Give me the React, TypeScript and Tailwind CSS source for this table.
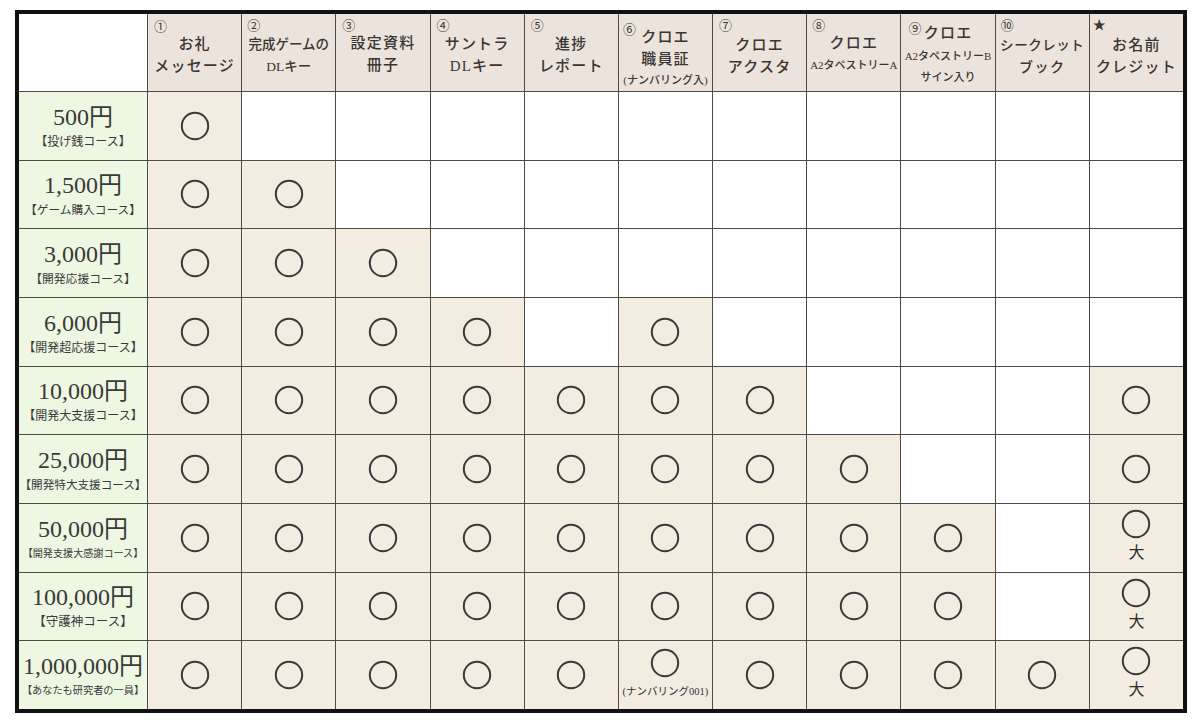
import React from "react";

const SERIF = { fontFamily: '"Liberation Serif", "Noto Sans CJK JP", serif' };
const SANS = { fontFamily: '"Noto Sans CJK JP", "Noto Sans", sans-serif' };

type Line = { t: string; small?: boolean; size?: string; lh?: string };
type Col = { n: string; pt: string; lines: Line[]; numPos: string };

const cols: Col[] = [
  { n: "①", pt: "pt-[19px]", numPos: "left-[6px] top-[5px]", lines: [{ t: "お礼" }, { t: "メッセージ" }] },
  {
    n: "②",
    pt: "pt-[20px]",
    numPos: "left-[5px] top-[4px]",
    lines: [
      { t: "完成ゲームの", size: "text-[13.5px] tracking-normal" },
      { t: "DLキー", size: "text-[13.5px] tracking-normal" },
    ],
  },
  { n: "③", pt: "pt-[18px]", numPos: "left-[6px] top-[4px]", lines: [{ t: "設定資料" }, { t: "冊子" }] },
  { n: "④", pt: "pt-[19px]", numPos: "left-[6px] top-[4px]", lines: [{ t: "サントラ" }, { t: "DLキー" }] },
  { n: "⑤", pt: "pt-[19px]", numPos: "left-[6px] top-[4px]", lines: [{ t: "進捗" }, { t: "レポート" }] },
  {
    n: "⑥",
    pt: "pt-[12px]",
    numPos: "left-[4px] top-[8px]",
    lines: [{ t: "クロエ" }, { t: "職員証" }, { t: "(ナンバリング入)", small: true, lh: "leading-[20px]" }],
  },
  { n: "⑦", pt: "pt-[20px]", numPos: "left-[6px] top-[4px]", lines: [{ t: "クロエ" }, { t: "アクスタ" }] },
  {
    n: "⑧",
    pt: "pt-[18px]",
    numPos: "left-[5px] top-[4px]",
    lines: [{ t: "クロエ" }, { t: "A2タペストリーA", small: true, lh: "leading-[22px]" }],
  },
  {
    n: "⑨",
    pt: "pt-[8px]",
    numPos: "left-[7px] top-[7px]",
    lines: [
      { t: "クロエ" },
      { t: "A2タペストリーB", small: true, lh: "leading-[24px]" },
      { t: "サイン入り", small: true, lh: "leading-[18px]" },
    ],
  },
  {
    n: "⑩",
    pt: "pt-[21px]",
    numPos: "left-[5px] top-[4px]",
    lines: [
      { t: "シークレット", size: "text-[13.5px] tracking-[0.04em]" },
      { t: "ブック", size: "text-[14px] tracking-[0.1em]" },
    ],
  },
  { n: "★", pt: "pt-[20px]", numPos: "left-[3px] top-[3px]", lines: [{ t: "お名前" }, { t: "クレジット" }] },
];

type Row = { price: string; label: string; lsize: string; filled: number[]; dai?: boolean; numbering?: boolean };

const range = (n: number) => Array.from({ length: n }, (_, i) => i);

const rows: Row[] = [
  { price: "500円", label: "【投げ銭コース】", lsize: "text-[12px]", filled: range(1) },
  { price: "1,500円", label: "【ゲーム購入コース】", lsize: "text-[11.7px]", filled: range(2) },
  { price: "3,000円", label: "【開発応援コース】", lsize: "text-[11.8px]", filled: range(3) },
  { price: "6,000円", label: "【開発超応援コース】", lsize: "text-[12px]", filled: [0, 1, 2, 3, 5] },
  { price: "10,000円", label: "【開発大支援コース】", lsize: "text-[12px]", filled: [...range(7), 10] },
  { price: "25,000円", label: "【開発特大支援コース】", lsize: "text-[11.6px]", filled: [...range(8), 10] },
  { price: "50,000円", label: "【開発支援大感謝コース】", lsize: "text-[10.1px]", filled: [...range(9), 10], dai: true },
  { price: "100,000円", label: "【守護神コース】", lsize: "text-[12.5px]", filled: [...range(9), 10], dai: true },
  { price: "1,000,000円", label: "【あなたも研究者の一員】", lsize: "text-[10.2px]", filled: range(11), dai: true, numbering: true },
];

function Circle() {
  return (
    <svg width="30" height="30" viewBox="0 0 30 30" className="block">
      <circle cx="15" cy="15" r="13.2" fill="none" stroke="#3a3a3a" strokeWidth="2" />
    </svg>
  );
}

function HeaderCell({ c }: { c: Col }) {
  return (
    <div className={`relative bg-[#ece4dc] text-[#3a3533] ${c.pt}`}>
      <span className={`absolute ${c.numPos} text-[13px] leading-none text-[#3a3533]`} style={SANS}>
        {c.n}
      </span>
      <div className="flex flex-col items-center">
        {c.lines.map((l, i) =>
          l.small ? (
            <div key={i} className={`text-[11px] ${l.lh} whitespace-nowrap font-medium`} style={SERIF}>
              {l.t}
            </div>
          ) : (
            <div
              key={i}
              className={`${l.size ?? "text-[15px] tracking-[0.08em]"} leading-[22px] whitespace-nowrap font-medium`}
              style={SERIF}
            >
              {l.t}
            </div>
          )
        )}
      </div>
    </div>
  );
}

function BodyCell({ row, col }: { row: Row; col: number }) {
  const filled = row.filled.includes(col);
  if (!filled) return <div className="bg-white" />;
  if (col === 10 && row.dai) {
    return (
      <div className="bg-[#f3ece0] flex flex-col items-center pt-[5px]">
        <Circle />
        <span className="text-[16px] leading-[22px] mt-[3px] text-[#2e2e2e]" style={SERIF}>
          大
        </span>
      </div>
    );
  }
  if (col === 5 && row.numbering) {
    return (
      <div className="bg-[#f3ece0] flex flex-col items-center pt-[7px]">
        <Circle />
        <span className="text-[10.5px] leading-[16px] mt-[6px] text-[#333] whitespace-nowrap" style={SERIF}>
          (ナンバリング001)
        </span>
      </div>
    );
  }
  return (
    <div className="bg-[#f3ece0] flex items-center justify-center">
      <Circle />
    </div>
  );
}

export default function App() {
  return (
    <div className="w-[1200px] h-[724px] bg-white pl-[15px] pt-[10px]">
      <div className="w-[1172px] h-[703px] border-4 border-[#111]">
        <div className="grid h-full w-full gap-px bg-[#4d4a47] grid-cols-[128px_repeat(11,minmax(0,1fr))] grid-rows-[77px_repeat(9,minmax(0,1fr))]">
          <div className="bg-white" />
          {cols.map((c, i) => (
            <HeaderCell key={i} c={c} />
          ))}
          {rows.map((r, ri) => (
            <React.Fragment key={ri}>
              <div className="bg-[#eef7e2] flex flex-col items-center justify-center text-[#3a3a3a]">
                <div className="text-[24px] leading-[30px] whitespace-nowrap" style={SERIF}>
                  {r.price}
                </div>
                <div className={`${r.lsize} leading-[18px] whitespace-nowrap`} style={SANS}>
                  {r.label}
                </div>
              </div>
              {range(11).map((ci) => (
                <BodyCell key={ci} row={r} col={ci} />
              ))}
            </React.Fragment>
          ))}
        </div>
      </div>
    </div>
  );
}
